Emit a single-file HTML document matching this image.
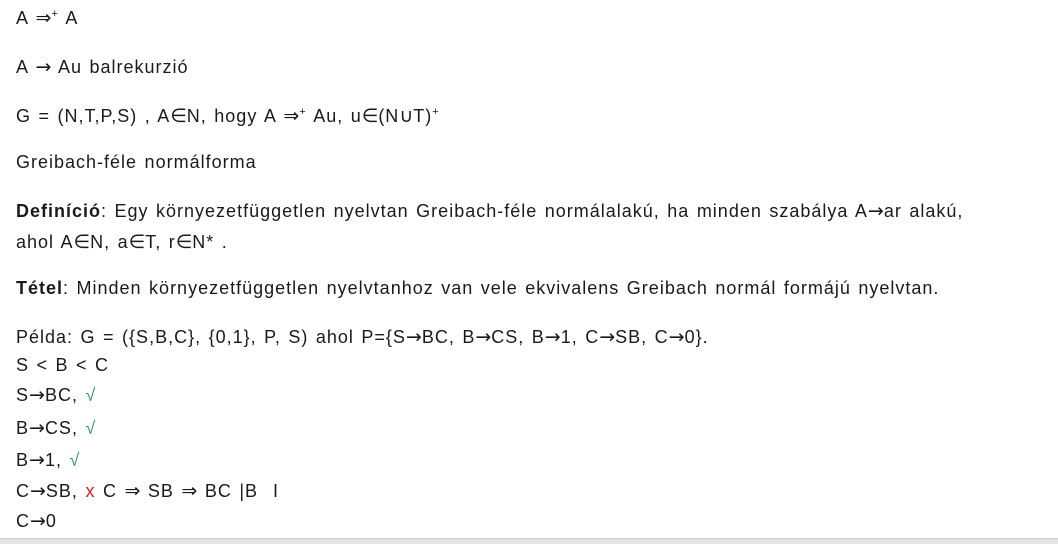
<!DOCTYPE html>
<html><head><meta charset="utf-8"><style>
body{margin:0;width:1058px;height:543px;background:#fff;overflow:hidden;position:relative;font-family:"Liberation Sans",sans-serif;color:#1a1a1a}
.l{position:absolute;left:16px;font-size:18px;line-height:20px;white-space:nowrap;letter-spacing:1px;word-spacing:1.5px}
sup{font-size:11px;vertical-align:7px;line-height:0}
.a{font-family:"DejaVu Sans",sans-serif;font-size:19px;letter-spacing:0}
.g{color:#2a9a6a}.r{color:#e02020}
.bar{position:absolute;left:0;right:0;top:538px;height:5px;background:#e4e4e4;border-top:1px solid #ccc}
</style></head><body>
<div class="l" style="top:8px">A <span class="a">⇒</span><sup>+</sup> A</div>
<div class="l" style="top:57px">A <span class="a">→</span> Au balrekurzió</div>
<div class="l" style="top:106px">G = (N,T,P,S) , A<span class="a">∈</span>N, hogy A <span class="a">⇒</span><sup>+</sup> Au, u<span class="a">∈</span>(N<span class="a">∪</span>T)<sup>+</sup></div>
<div class="l" style="top:152px">Greibach-féle normálforma</div>
<div class="l" style="top:201px"><b>Definíció</b>: Egy környezetfüggetlen nyelvtan Greibach-féle normálalakú, ha minden szabálya A<span class="a">→</span>ar alakú,</div>
<div class="l" style="top:232px">ahol A<span class="a">∈</span>N, a<span class="a">∈</span>T, r<span class="a">∈</span>N* .</div>
<div class="l" style="top:278px"><b>Tétel</b>: Minden környezetfüggetlen nyelvtanhoz van vele ekvivalens Greibach normál formájú nyelvtan.</div>
<div class="l" style="top:327px">Példa: G = ({S,B,C}, {0,1}, P, S) ahol P={S<span class="a">→</span>BC, B<span class="a">→</span>CS, B<span class="a">→</span>1, C<span class="a">→</span>SB, C<span class="a">→</span>0}.</div>
<div class="l" style="top:355px">S &lt; B &lt; C</div>
<div class="l" style="top:385px">S<span class="a">→</span>BC, <span class="g">√</span></div>
<div class="l" style="top:418px">B<span class="a">→</span>CS, <span class="g">√</span></div>
<div class="l" style="top:450px">B<span class="a">→</span>1, <span class="g">√</span></div>
<div class="l" style="top:481px">C<span class="a">→</span>SB, <span class="r">x</span> C <span class="a">⇒</span> SB <span class="a">⇒</span> BC |B &nbsp;I</div>
<div class="l" style="top:511px">C<span class="a">→</span>0</div>
<div class="bar"></div>
</body></html>
